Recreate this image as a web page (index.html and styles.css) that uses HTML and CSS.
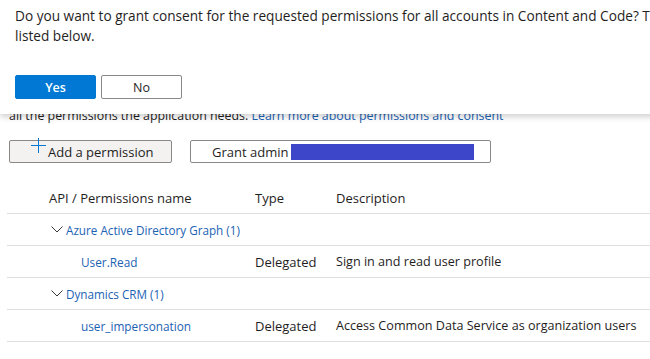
FILE: index.html
```html
<!DOCTYPE html>
<html lang="en">
<head>
  <meta charset="UTF-8" />
  <title>API permissions</title>
  <link rel="stylesheet" href="styles.css">
</head>
<body>
  <div class="page">
    <!-- Consent prompt over the page -->
    <div class="consent">
      <p class="consent-text">Do you want to grant consent for the requested permissions for all accounts in Content and Code? This will update any existing admin consent records this application already has to match what is<br>listed below.</p>
      <div class="consent-actions">
        <button class="btn-primary">Yes</button>
        <button class="btn-default">No</button>
      </div>
    </div>

    <p class="intro">all the permissions the application needs. <a href="#">Learn more about permissions and consent</a></p>

    <div class="toolbar">
      <button class="btn-add"><span class="plus"></span>Add a permission</button>
      <button class="btn-grant">Grant admin <span class="redacted"></span></button>
    </div>

    <div class="perm-grid">
      <div class="row head">
        <div class="c-name">API / Permissions name</div><div>Type</div><div>Description</div>
      </div>
      <div class="row group">
        <div class="c-group">
          <svg class="chev" width="12" height="7" viewBox="0 0 12 7"><polyline points="0.5,0.5 6,6 11.5,0.5" /></svg>
          <a href="#">Azure Active Directory Graph (1)</a>
        </div>
      </div>
      <div class="row">
        <div class="c-perm"><a href="#">User.Read</a></div><div>Delegated</div><div>Sign in and read user profile</div>
      </div>
      <div class="row group">
        <div class="c-group">
          <svg class="chev" width="12" height="7" viewBox="0 0 12 7"><polyline points="0.5,0.5 6,6 11.5,0.5" /></svg>
          <a href="#">Dynamics CRM (1)</a>
        </div>
      </div>
      <div class="row">
        <div class="c-perm"><a href="#">user_impersonation</a></div><div>Delegated</div><div>Access Common Data Service as organization users</div>
      </div>
    </div>
  </div>
</body>
</html>
```

FILE: styles.css
```css
:root {
  --blue: #0078d4;
  --link: #1b62b3;
  --text: #1f1e1d;
  --line: #e1dfdd;
}
* { box-sizing: border-box; }
body {
  margin: 0;
  font-family: "Open Sans", Arial, sans-serif;
  color: var(--text);
  background: #fff;
  overflow: hidden;
}
a { color: var(--link); text-decoration: none; }
button { font-family: inherit; color: var(--text); cursor: pointer; }

.page { position: relative; width: 650px; height: 359px; overflow: hidden; }

/* ===== Consent prompt ===== */
.consent {
  position: absolute; top: 0; left: 0; width: 700px; height: 114px;
  background: #fff; box-shadow: 0 3px 6px rgba(0, 0, 0, 0.18);
  padding: 6px 0 0 15px; z-index: 2;
}
.consent-text { margin: 0; font-size: 13.65px; line-height: 20px; white-space: nowrap; }
.consent-actions { display: flex; gap: 5px; margin-top: 29px; }
.btn-primary, .btn-default { width: 81px; height: 24px; font-size: 12.5px; font-weight: 600; padding: 0; border-radius: 2px; }
.btn-primary { background: var(--blue); color: #fff; border: 1px solid var(--blue); }
.btn-default { background: #fff; border: 1px solid #8a8886; font-weight: 400; }

/* ===== Page content ===== */
.intro { margin: 0; padding: 106px 0 0 9px; font-size: 12.4px; line-height: 20px; white-space: nowrap; }

.toolbar { display: flex; gap: 18px; padding: 14px 0 0 9px; }
.btn-add, .btn-grant { height: 23px; font-size: 13px; padding: 0; border: 1px solid #8a8886; border-radius: 2px; display: flex; align-items: center; }
.btn-add { width: 163px; background: #f3f2f1; padding-left: 38px; position: relative; }
.plus { position: absolute; left: 21px; top: -3px; width: 15px; height: 15px; }
.plus::before, .plus::after { content: ""; position: absolute; background: var(--blue); }
.plus::before { left: 7px; top: 0; width: 1px; height: 15px; }
.plus::after { left: 0; top: 7px; width: 15px; height: 1px; }
.btn-grant { width: 301px; background: #fff; padding-left: 21px; }
.redacted { display: inline-block; width: 183px; height: 16px; background: #3d45c8; margin-left: 3px; }

/* ===== Permissions grid ===== */
.perm-grid { margin: 19px 0 0 7px; width: 660px; font-size: 12.6px; }
.row { display: grid; grid-template-columns: 248px 81px 1fr; align-items: center; height: 32px; border-bottom: 1px solid var(--line); }
.row.head { font-size: 13px; }
.row > div:nth-child(2) { font-size: 13px; }
.c-name { padding-left: 42px; }
.c-perm { padding-left: 74px; font-size: 11.8px; }
.c-group { grid-column: 1 / -1; padding-left: 44px; display: flex; align-items: center; font-size: 11.7px; }
.chev { margin-right: 3px; fill: none; stroke: #3b3a39; stroke-width: 1; }
```
